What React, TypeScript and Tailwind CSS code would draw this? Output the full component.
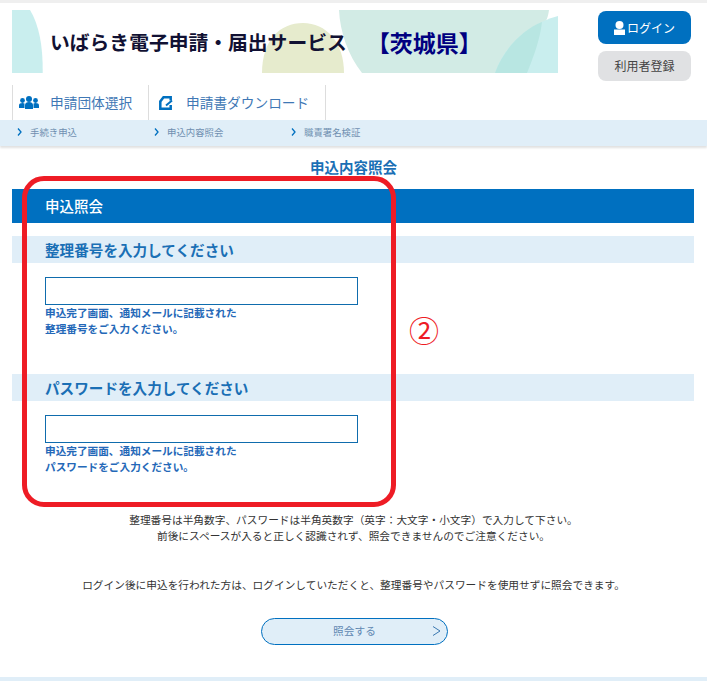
import React from 'react';

const FONT = "font-['Noto_Sans_CJK_JP','Noto_Sans',sans-serif]";

const UsersIcon: React.FC = () => (
  <svg width="20" height="13" viewBox="0 0 20 13" className="fill-[#0070c0]">
    <circle cx="3.5" cy="4.5" r="2.4" />
    <circle cx="16.5" cy="4.5" r="2.4" />
    <circle cx="10" cy="3" r="3" />
    <path d="M0 12V9.5c0-1.600 1.400-2.400 3.500-2.400 1 0 1.500.2 2 .5V12z" />
    <path d="M20 12V9.500c0-1.600-1.400-2.400-3.500-2.400-1 0-1.500.2-2 .5V12z" />
    <path d="M6 13V9c0-2 1.800-3 4-3s4 1 4 3v4z" />
  </svg>
);

const FileIcon: React.FC = () => (
  <svg width="14" height="14" viewBox="0 0 14 14" fill="none" className="stroke-[#0070c0]" strokeWidth="2.5">
    <path d="M11.700 4.500V1.300H4.500L1.300 5.500V12.700H11.700V9" />
    <path d="M7 9.500L13 4.500" strokeWidth="2" />
  </svg>
);

const Chevron: React.FC = () => (
  <svg width="5" height="8" viewBox="0 0 5 8" fill="none" className="stroke-[#0070c0]" strokeWidth="1.3">
    <path d="M1 .5 4 4 1 7.500" />
  </svg>
);

const SectionForm: React.FC<{ title: string; hint: string; gap: string }> = ({ title, hint, gap }) => (
  <section className={gap}>
    <h3 className="h-[27px] bg-[#e0eef8] pl-[33px] text-[14.6px] leading-[27px] font-bold text-[#1a6fb5]">{title}</h3>
    <div className="pl-[33px] pt-[14px]">
      <input type="text" className="block h-[28px] w-[313px] border border-[#0f6cad] bg-white" />
      <p className="text-[10.65px] leading-[16px] font-bold text-[#2468b8]">
        申込完了画面、通知メールに記載された
        <br />
        {hint}
      </p>
    </div>
  </section>
);

const App: React.FC = () => {
  return (
    <div className={`relative h-[681px] w-[707px] overflow-hidden bg-white ${FONT}`}>
      <div className="h-[3px] bg-[#efefef]" />

      {/* ヘッダー */}
      <header className="flex h-[82px] justify-between pl-3 pr-4 pt-[7px]">
        <div className="relative h-[63px] w-[546px]">
          <svg width="546" height="63" viewBox="0 0 546 63" className="block">
            <path d="M0 0H18C27 15 31 35 30.700 63H0Z" fill="#c9eeee" />
            <path d="M250 63C250 30 268 13 291 13C314 13 332 32 332 63Z" fill="#e6ebcd" />
            <path d="M327 0H537C536 8 534 12 530 15C527 30 521 48 515 63H350C336 45 328 22 327 0Z" fill="#d2ebe5" />
            <path d="M483 63C492 36 516 14 546 6V63Z" fill="#c9eeee" />
            <path d="M483 63C491 40 510 20 530 12C528 30 521 48 515 63Z" fill="#b8e6e2" />
          </svg>
          <h1 className="absolute left-[38px] top-[16px] flex items-center text-[19.8px] leading-[32px] font-bold text-[#111133]">
            <span>いばらき電子申請・届出サービス</span>
            <span className="ml-[20px] text-[23px] text-[#000080]">【茨城県】</span>
          </h1>
        </div>
        <div className="flex w-[93px] flex-col gap-[7px] pt-[1px]">
          <button className="flex h-[33px] items-center justify-center gap-[2px] rounded-lg bg-[#0070c0] text-[12px] text-white">
            <svg width="11" height="14" viewBox="0 0 11 14" className="fill-white">
              <circle cx="5.5" cy="4" r="4" />
              <rect x="0" y="8.5" width="11" height="5.500" />
            </svg>
            ログイン
          </button>
          <button className="h-[30px] rounded-lg bg-[#e0e1e3] text-[12px] text-[#444]">利用者登録</button>
        </div>
      </header>

      {/* グローバルナビ */}
      <nav className="ml-3 flex h-[35px] text-[13.7px] text-[#3f78b5]">
        <div className="flex w-[136px] items-center gap-[11px] border-l border-[#ddd] pl-[6px]">
          <UsersIcon />
          <span>申請団体選択</span>
        </div>
        <div className="flex w-[178px] items-center gap-[13px] border-x border-[#ddd] pl-[10px]">
          <FileIcon />
          <span>申請書ダウンロード</span>
        </div>
      </nav>
      <div className="flex h-[26px] items-center bg-[#e0eef8] pb-[2px] pl-[17px] text-[9.4px] text-[#6f8fb0] shadow-[0_2px_2px_rgba(0,0,0,0.12)]">
        {['手続き申込', '申込内容照会', '職責署名検証'].map((label) => (
          <div key={label} className="flex w-[137px] items-center gap-[8px]">
            <Chevron />
            <span>{label}</span>
          </div>
        ))}
      </div>

      <main>
        <h2 className="mt-[11px] text-center text-[14.5px] leading-[20px] font-bold text-[#1a6fb5]">申込内容照会</h2>
        <div className="mx-3 mt-[12px] w-[682px]">
          <div className="h-[34px] bg-[#0070c0] pl-[33px] text-[14.5px] leading-[34px] font-medium text-white">申込照会</div>
          <SectionForm title="整理番号を入力してください" hint="整理番号をご入力ください。" gap="mt-[13px]" />
          <SectionForm title="パスワードを入力してください" hint="パスワードをご入力ください。" gap="mt-[37px]" />
        </div>

        <div className="mt-[37px] text-center text-[10.7px] leading-[16px] text-[#333]">
          <p>整理番号は半角数字、パスワードは半角英数字（英字：大文字・小文字）で入力して下さい。</p>
          <p>前後にスペースが入ると正しく認識されず、照会できませんのでご注意ください。</p>
          <p className="mt-[33px]">ログイン後に申込を行われた方は、ログインしていただくと、整理番号やパスワードを使用せずに照会できます。</p>
        </div>

        <button className="relative ml-[261px] mt-[25px] block h-[27px] w-[187px] rounded-full border-[1.5px] border-[#0070c0] bg-[#e0eef8] text-[10.7px] text-[#5f88b2]">
          照会する
          <svg width="9" height="10" viewBox="0 0 9 10" fill="none" className="absolute right-[6px] top-[7px] stroke-[#3b78b0]" strokeWidth="1">
            <path d="M1 .5 8 5 1 9.500" />
          </svg>
        </button>
      </main>

      <div className="absolute inset-x-0 bottom-0 h-[4px] bg-[#e0eef8]" />

      {/* 赤枠の注釈 */}
      <div className="absolute left-[22px] top-[176px] h-[331px] w-[374px] rounded-[22px] border-[5px] border-[#ee1c25]" />
      <span className="absolute left-[409px] top-[308px] text-[30px] leading-[42px] text-[#ee1c25]">②</span>
    </div>
  );
};

export default App;
